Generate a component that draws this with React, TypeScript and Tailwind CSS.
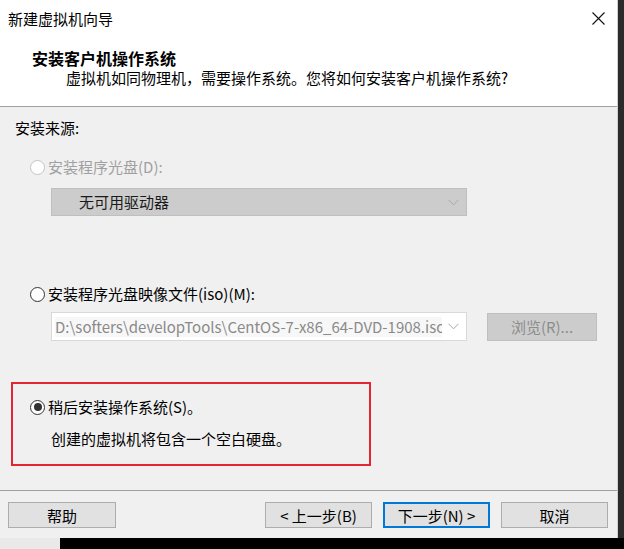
import React from "react";

const font = { fontFamily: '"Noto Sans CJK SC", "Noto Sans", sans-serif' };

function Radio({ checked = false, disabled = false }: { checked?: boolean; disabled?: boolean }) {
    return (
        <span
            className={`w-[15px] h-[15px] rounded-full border flex items-center justify-center bg-white shrink-0 ${
                disabled ? "border-[#c4c4c4]" : "border-[#333333]"
            }`}
        >
            {checked && <span className="w-[8px] h-[8px] rounded-full bg-[#333333]" />}
        </span>
    );
}

function Chevron() {
    return (
        <svg width="11" height="7" viewBox="0 0 11 7" className="shrink-0">
            <path d="M0.5 0.8 L5.5 5.8 L10.5 0.8" fill="none" stroke="#a8a8a8" strokeWidth="1" />
        </svg>
    );
}

function FooterButton({ label, primary = false, wide = false }: { label: string; primary?: boolean; wide?: boolean }) {
    return (
        <button
            type="button"
            className={`h-[26px] ${wide ? "w-[108px]" : "w-[107px]"} bg-[#e1e1e1] text-[15px] text-black flex items-center justify-center leading-none ${
                primary ? "border-2 border-[#0078d7]" : "border border-[#adadad]"
            }`}
        >
            {label}
        </button>
    );
}

export default function App() {
    return (
        <div className="w-[624px] h-[549px] flex flex-col bg-black overflow-hidden text-black" style={font}>
            <div className="flex h-[538px]">
                <div className="w-[618px] h-full flex flex-col bg-[#f0f0f0] border-r border-[#cfcfcf]">
                    {/* header */}
                    <div className="h-[107px] bg-white border-b border-[#a0a0a0] shrink-0">
                        <div className="h-9 flex items-center justify-between pl-2 pr-[12px] pt-[1px]">
                            <span className="text-[15px] leading-5">新建虚拟机向导</span>
                            <svg width="13" height="13" viewBox="0 0 13 13">
                                <path d="M0.5 0.5 L12.5 12.5 M12.5 0.5 L0.5 12.5" stroke="#111" strokeWidth="1.1" />
                            </svg>
                        </div>
                        <div className="mt-3 pl-8 text-[16px] leading-5 font-bold">安装客户机操作系统</div>
                        <div className="pl-[66px] text-[15px] leading-5">
                            虚拟机如同物理机，需要操作系统。您将如何安装客户机操作系统?
                        </div>
                    </div>

                    {/* body */}
                    <div className="flex-1 flex flex-col text-[15px] leading-5">
                        <div className="mt-[11px] pl-[15px]">安装来源:</div>

                        <div className="mt-[19px] pl-[30px] flex items-center gap-[3px] text-[#a0a0a0]">
                            <Radio disabled />
                            <span>安装程序光盘(D):</span>
                        </div>
                        <div className="mt-[11px] ml-[51px] w-[416px] h-[28px] bg-[#cccccc] border border-[#bfbfbf] flex items-center justify-between pl-[27px] pr-[7px]">
                            <span className="text-[#1a1a1a]">无可用驱动器</span>
                            <Chevron />
                        </div>

                        <div className="mt-[68px] pl-[30px] flex items-center gap-[3px]">
                            <Radio />
                            <span>安装程序光盘映像文件(iso)(M):</span>
                        </div>
                        <div className="mt-[8px] ml-[51px] flex items-center gap-[20px]">
                            <div className="w-[416px] h-[29px] bg-white border border-[#d9d9d9] flex items-center pl-[3px] pr-[7px]">
                                <span className="flex-1 overflow-hidden whitespace-nowrap text-[#8a8a8a] bg-[#f7f7f7]">
                                    D:\softers\developTools\CentOS-7-x86_64-DVD-1908.iso
                                </span>
                                <span className="pl-[6px] flex items-center">
                                    <Chevron />
                                </span>
                            </div>
                            <div className="w-[110px] h-[28px] bg-[#cccccc] border border-[#bfbfbf] flex items-center justify-center text-[#8c8c8c]">
                                浏览(R)...
                            </div>
                        </div>

                        <div className="mt-[41px] ml-[11px] w-[360px] h-[84px] border-2 border-[#e3262f] pl-[17px] pt-[13px]">
                            <div className="flex items-center gap-[3px]">
                                <Radio checked />
                                <span>稍后安装操作系统(S)。</span>
                            </div>
                            <div className="mt-[12px] pl-[21px]">创建的虚拟机将包含一个空白硬盘。</div>
                        </div>
                    </div>

                    {/* footer */}
                    <div className="h-[48px] shrink-0 border-t border-[#a0a0a0] flex items-start pt-[11px] pl-2 pr-[9px]">
                        <FooterButton label="帮助" wide />
                        <div className="flex-1" />
                        <div className="flex gap-[11px]">
                            <FooterButton label="< 上一步(B)" />
                            <FooterButton label="下一步(N) >" primary />
                            <FooterButton label="取消" />
                        </div>
                    </div>
                </div>
                <div className="flex-1 bg-[#2b2b2b]" />
            </div>
            <div className="flex h-[11px]">
                <div className="w-[60px] bg-[#e9e9e9]" />
                <div className="flex-1 bg-black" />
            </div>
        </div>
    );
}
